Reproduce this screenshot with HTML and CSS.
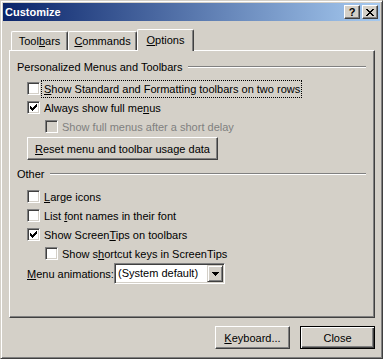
FILE: index.html
```html
<!DOCTYPE html>
<html lang="en">
<head>
    <meta charset="UTF-8">
    <title>Customize</title>
    <link rel="stylesheet" href="styles.css">
</head>
<body>
    <div class="window">
        <div class="titlebar">
            <span class="title">Customize</span>
            <div class="caption-btns">
                <span class="cap-btn cap-help">?</span>
                <span class="cap-btn">
                    <svg width="8" height="7" viewBox="0 0 8 7" shape-rendering="crispEdges"><path d="M0 0h2v1h-2z M6 0h2v1h-2z M1 1h2v1h-2z M5 1h2v1h-2z M2 2h4v1h-4z M3 3h2v1h-2z M2 4h4v1h-4z M1 5h2v1h-2z M5 5h2v1h-2z M0 6h2v1h-2z M6 6h2v1h-2z" fill="#000"/></svg>
                </span>
            </div>
        </div>

        <div class="dialog">
            <div class="tabs">
                <div class="tab tab-toolbars">Tool<u>b</u>ars</div>
                <div class="tab tab-commands"><u>C</u>ommands</div>
                <div class="tab tab-options tab-active"><u>O</u>ptions</div>
            </div>

            <div class="panel">
                <div class="group-head">Personalized Menus and Toolbars</div>
                <div class="check-row first-row">
                    <span class="box"></span>
                    <span class="label focus"><u>S</u>how Standard and Formatting toolbars on two rows</span>
                </div>
                <div class="check-row">
                    <span class="box"><svg width="7" height="7" viewBox="0 0 7 7" shape-rendering="crispEdges"><path d="M6 0h1v1h-1z M5 1h2v1h-2z M0 2h1v1h-1z M4 2h3v1h-3z M0 3h2v1h-2z M3 3h3v1h-3z M0 4h5v1h-5z M1 5h3v1h-3z M2 6h1v1h-1z" fill="#000"/></svg></span>
                    <span class="label">Always show full me<u>n</u>us</span>
                </div>
                <div class="check-row sub">
                    <span class="box box-disabled"></span>
                    <span class="label label-disabled">Show full menus after a short delay</span>
                </div>
                <button class="btn btn-reset"><u>R</u>eset menu and toolbar usage data</button>

                <div class="group-head group-other">Other</div>
                <div class="check-row first-row-other">
                    <span class="box"></span>
                    <span class="label"><u>L</u>arge icons</span>
                </div>
                <div class="check-row">
                    <span class="box"></span>
                    <span class="label">List <u>f</u>ont names in their font</span>
                </div>
                <div class="check-row">
                    <span class="box"><svg width="7" height="7" viewBox="0 0 7 7" shape-rendering="crispEdges"><path d="M6 0h1v1h-1z M5 1h2v1h-2z M0 2h1v1h-1z M4 2h3v1h-3z M0 3h2v1h-2z M3 3h3v1h-3z M0 4h5v1h-5z M1 5h3v1h-3z M2 6h1v1h-1z" fill="#000"/></svg></span>
                    <span class="label">Show Screen<u>T</u>ips on toolbars</span>
                </div>
                <div class="check-row sub">
                    <span class="box"></span>
                    <span class="label">Show s<u>h</u>ortcut keys in ScreenTips</span>
                </div>
                <div class="select-row">
                    <span class="select-label"><u>M</u>enu animations:</span>
                    <div class="select">
                        <span class="select-value">(System default)</span>
                        <span class="select-arrow">
                            <svg width="7" height="4" viewBox="0 0 7 4" shape-rendering="crispEdges"><path d="M0 0h7v1h-1v1h-1v1h-1v1h-1v-1h-1v-1h-1v-1h-1z" fill="#000"/></svg>
                        </span>
                    </div>
                </div>
            </div>

            <div class="footer">
                <button class="btn btn-footer"><u>K</u>eyboard...</button>
                <button class="btn btn-footer btn-default">Close</button>
            </div>
        </div>
    </div>
</body>
</html>
```

FILE: styles.css
```css
:root {
    --face: #d4d0c8;
    --light: #ffffff;
    --shadow: #808080;
    --dark: #404040;
}

body {
    margin: 0;
    font-family: "Liberation Sans", Arial, sans-serif;
    font-size: 11px;
    color: #000;
    background: var(--face);
}

.window {
    width: 383px;
    height: 359px;
    box-sizing: border-box;
    padding: 2px;
    background: var(--face);
    border: 1px solid;
    border-color: var(--face) var(--dark) var(--dark) var(--face);
    box-shadow: inset 1px 1px var(--light), inset -1px -1px var(--shadow);
}

/* title bar */
.titlebar {
    height: 18px;
    display: flex;
    align-items: flex-start;
    background: linear-gradient(to right, #0a246a, #a6caf0);
}

.title {
    flex: 1;
    padding-left: 2px;
    color: #fff;
    font-weight: bold;
    line-height: 18px;
}

.caption-btns {
    display: flex;
    gap: 2px;
    margin: 2px 2px 0 0;
}

.cap-btn {
    width: 16px;
    height: 14px;
    box-sizing: border-box;
    display: flex;
    align-items: center;
    justify-content: center;
    background: var(--face);
    border: 1px solid;
    border-color: var(--light) var(--dark) var(--dark) var(--light);
    box-shadow: inset -1px -1px var(--shadow);
}

.cap-help {
    font-weight: bold;
    font-size: 11px;
    line-height: 12px;
}

/* dialog body */
.dialog {
    padding: 8px 5px 0 6px;
}

.tabs {
    display: flex;
    align-items: flex-end;
    height: 21px;
    padding-left: 2px;
}

.tab {
    height: 19px;
    box-sizing: border-box;
    padding-top: 2px;
    line-height: 14px;
    text-align: center;
    border-top: 1px solid var(--light);
    border-left: 1px solid var(--light);
    border-right: 1px solid var(--dark);
    border-radius: 2px 2px 0 0;
    box-shadow: inset -1px 0 var(--shadow);
}

.tab-toolbars { width: 57px; }
.tab-commands { width: 69px; }
.tab-options { width: 57px; }

.tab-active {
    height: 22px;
    margin-bottom: -1px;
    padding-top: 3px;
    position: relative;
    z-index: 1;
    background: var(--face);
}

.panel {
    height: 268px;
    box-sizing: border-box;
    padding: 9px 8px 0 7px;
    border: 1px solid;
    border-color: var(--light) var(--dark) var(--dark) var(--light);
    box-shadow: inset -1px -1px var(--shadow);
}

.group-head {
    display: flex;
    align-items: center;
    gap: 5px;
    height: 14px;
    line-height: 14px;
}

.group-head::after {
    content: "";
    flex: 1;
    border-top: 1px solid var(--shadow);
    border-bottom: 1px solid var(--light);
}

.group-other {
    margin-top: 7px;
}

.check-row {
    display: flex;
    align-items: center;
    gap: 2px;
    height: 19px;
    padding-left: 10px;
}

.check-row.sub {
    padding-left: 28px;
}

.first-row { margin-top: 5px; }
.first-row-other { margin-top: 6px; }

.box {
    width: 13px;
    height: 13px;
    box-sizing: border-box;
    display: flex;
    align-items: center;
    justify-content: center;
    background: #fff;
    border: 1px solid;
    border-color: var(--shadow) var(--light) var(--light) var(--shadow);
    box-shadow: inset 1px 1px var(--dark), inset -1px -1px var(--face);
}

.box-disabled {
    background: var(--face);
}

.label {
    padding: 1px 1px 1px 2px;
    line-height: 14px;
}

.label-disabled {
    color: var(--shadow);
}

.focus {
    outline: 1px dotted #000;
}

/* buttons */
.btn {
    height: 23px;
    box-sizing: border-box;
    padding: 0;
    font: inherit;
    color: #000;
    background: var(--face);
    border: 1px solid;
    border-color: var(--light) var(--dark) var(--dark) var(--light);
    box-shadow: inset -1px -1px var(--shadow);
}

.btn-reset {
    display: block;
    width: 191px;
    margin: 1px 0 0 10px;
}

.select-row {
    display: flex;
    align-items: center;
    height: 21px;
    padding-left: 10px;
}

.select-label {
    width: 87px;
}

.select {
    width: 111px;
    height: 21px;
    box-sizing: border-box;
    display: flex;
    background: #fff;
    border: 1px solid;
    border-color: var(--shadow) var(--light) var(--light) var(--shadow);
    box-shadow: inset 1px 1px var(--dark), inset -1px -1px var(--face);
    padding: 1px;
}

.select-value {
    flex: 1;
    padding-left: 2px;
    line-height: 17px;
}

.select-arrow {
    width: 16px;
    height: 17px;
    box-sizing: border-box;
    display: flex;
    align-items: center;
    justify-content: center;
    background: var(--face);
    border: 1px solid;
    border-color: var(--face) var(--dark) var(--dark) var(--face);
    box-shadow: inset 1px 1px var(--light), inset -1px -1px var(--shadow);
}

.footer {
    display: flex;
    justify-content: flex-end;
    gap: 10px;
    margin-top: 8px;
}

.btn-footer {
    width: 75px;
}

.btn-default {
    border: 1px solid #000;
    box-shadow: inset 1px 1px var(--light), inset -1px -1px var(--dark), inset -2px -2px var(--shadow);
}
```
